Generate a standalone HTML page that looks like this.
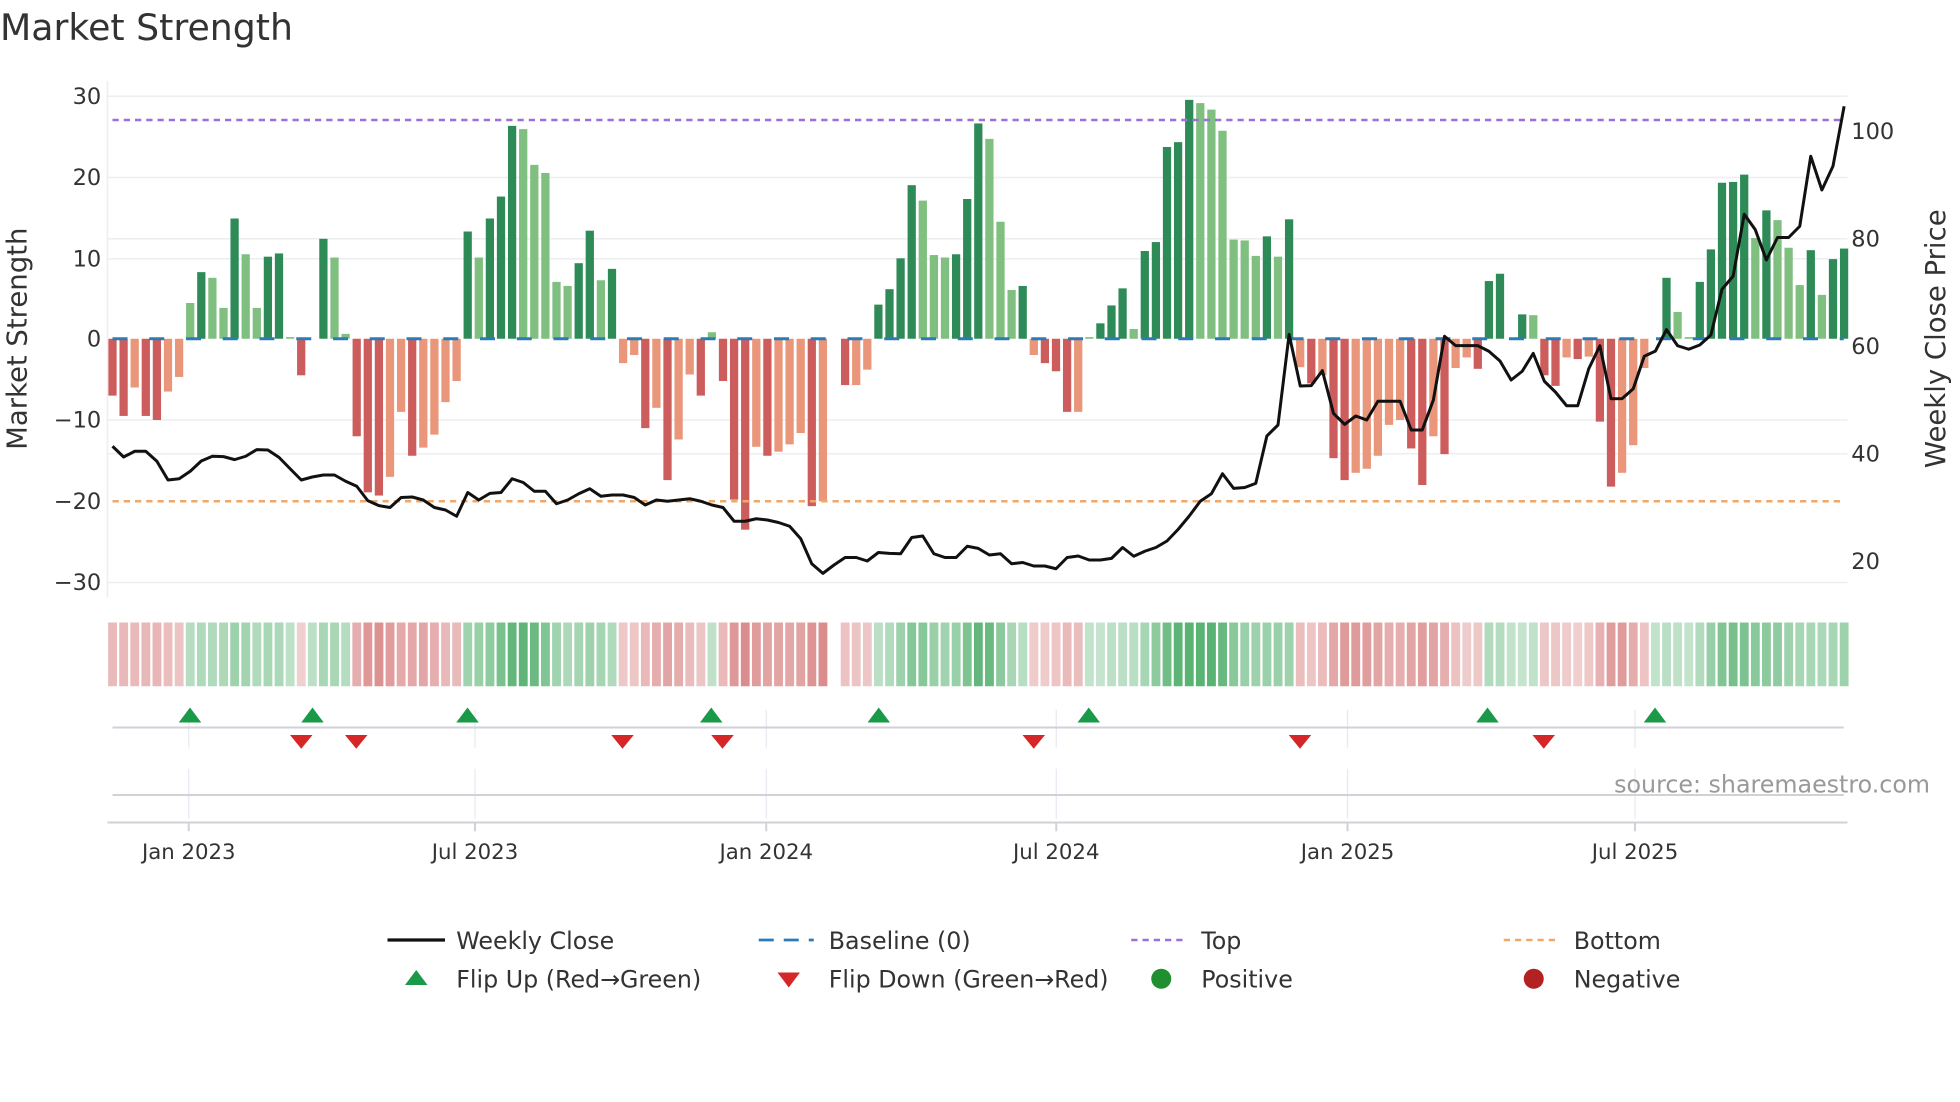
<!DOCTYPE html>
<html><head><meta charset="utf-8"><style>
html,body{margin:0;padding:0;background:#fff;width:1960px;height:1102px;overflow:hidden}
svg{display:block}
text{font-family:"DejaVu Sans","Liberation Sans",sans-serif;fill:#333}
</style></head><body>
<svg id="s" width="1960" height="1102" viewBox="0 0 1568 881.6" xmlns="http://www.w3.org/2000/svg">
<text x="0" y="32" font-size="29">Market Strength</text>
<g stroke="#eceef2" stroke-width="1.2">
<line x1="86" y1="77" x2="1478" y2="77"/><line x1="86" y1="142" x2="1478" y2="142"/><line x1="86" y1="207" x2="1478" y2="207"/><line x1="86" y1="336" x2="1478" y2="336"/><line x1="86" y1="466" x2="1478" y2="466"/>
<line x1="86" y1="191" x2="1478" y2="191"/><line x1="86" y1="363" x2="1478" y2="363"/>
<line x1="86" y1="65" x2="86" y2="478"/>
</g>
<g id="bars"></g>
<g id="base"></g>
<line x1="90" y1="96" x2="1475" y2="96" stroke="#9b6fdc" stroke-width="2" stroke-dasharray="5,4"/>
<line x1="90" y1="401" x2="1475" y2="401" stroke="#f0a868" stroke-width="2" stroke-dasharray="5,4"/>
<polyline id="price" fill="none" stroke="#111" stroke-width="2.4" stroke-linejoin="round"/>
<g font-size="18" text-anchor="end">
<text x="81" y="83">30</text><text x="81" y="148">20</text><text x="81" y="213">10</text><text x="81" y="277">0</text><text x="81" y="342">−10</text><text x="81" y="407">−20</text><text x="81" y="472">−30</text>
</g>
<g font-size="18">
<text x="1481" y="111">100</text><text x="1481" y="197">80</text><text x="1481" y="283">60</text><text x="1481" y="369">40</text><text x="1481" y="455">20</text>
</g>
<text font-size="22" transform="translate(21,271) rotate(-90)" text-anchor="middle">Market Strength</text>
<text font-size="22" transform="translate(1556,271) rotate(-90)" text-anchor="middle">Weekly Close Price</text>
<g id="strip"></g>
<g stroke="#e6eaf0" stroke-width="1">
<line x1="151" y1="568" x2="151" y2="598"/><line x1="380" y1="568" x2="380" y2="598"/><line x1="613" y1="568" x2="613" y2="598"/><line x1="845" y1="568" x2="845" y2="598"/><line x1="1078" y1="568" x2="1078" y2="598"/><line x1="1308" y1="568" x2="1308" y2="598"/>
<line x1="151" y1="615" x2="151" y2="655"/><line x1="380" y1="615" x2="380" y2="655"/><line x1="613" y1="615" x2="613" y2="655"/><line x1="845" y1="615" x2="845" y2="655"/><line x1="1078" y1="615" x2="1078" y2="655"/><line x1="1308" y1="615" x2="1308" y2="655"/>
</g>
<g stroke="#d0d2d8" stroke-width="1.6">
<line x1="90" y1="582" x2="1475" y2="582"/><line x1="90" y1="636" x2="1475" y2="636"/><line x1="86" y1="658" x2="1478" y2="658"/>
<line x1="151" y1="658" x2="151" y2="665"/><line x1="380" y1="658" x2="380" y2="665"/><line x1="613" y1="658" x2="613" y2="665"/><line x1="845" y1="658" x2="845" y2="665"/><line x1="1078" y1="658" x2="1078" y2="665"/><line x1="1308" y1="658" x2="1308" y2="665"/>
</g>
<g id="marks"></g>
<g font-size="17" text-anchor="middle">
<text x="151" y="687">Jan 2023</text><text x="380" y="687">Jul 2023</text><text x="613" y="687">Jan 2024</text><text x="845" y="687">Jul 2024</text><text x="1078" y="687">Jan 2025</text><text x="1308" y="687">Jul 2025</text>
</g>
<text x="1544" y="634" font-size="19" text-anchor="end" style="fill:#999">source: sharemaestro.com</text>
<g font-size="19">
<line x1="310" y1="752" x2="356" y2="752" stroke="#111" stroke-width="2.6"/>
<text x="365" y="759">Weekly Close</text>
<polygon points="324,788 342,788 333,776" fill="#1a9a48"/>
<text x="365" y="790">Flip Up (Red→Green)</text>
<line x1="607" y1="752" x2="651" y2="752" stroke="#2b7bb9" stroke-width="2.2" stroke-dasharray="12,8"/>
<text x="663" y="759">Baseline (0)</text>
<polygon points="622,778 640,778 631,790" fill="#d62728"/>
<text x="663" y="790">Flip Down (Green→Red)</text>
<line x1="905" y1="752" x2="949" y2="752" stroke="#9b6fdc" stroke-width="2" stroke-dasharray="5,4"/>
<text x="961" y="759">Top</text>
<circle cx="929" cy="783" r="8" fill="#1f8f2f"/>
<text x="961" y="790">Positive</text>
<line x1="1203" y1="752" x2="1247" y2="752" stroke="#f0a868" stroke-width="2" stroke-dasharray="5,4"/>
<text x="1259" y="759">Bottom</text>
<circle cx="1227" cy="783" r="8" fill="#b22222"/>
<text x="1259" y="790">Negative</text>
</g>
</svg>
<script>
var V=[-7,-9.5,-6,-9.5,-10,-6.5,-4.7,
4.4,8.2,7.5,3.8,14.8,10.4,3.8,10.1,10.5,
0.2,-4.5,0,12.3,10,0.6,
-12,-18.9,-19.3,-17,-9,-14.4,-13.4,-11.8,-7.8,-5.2,
13.2,10,14.8,17.5,26.2,25.8,21.4,20.4,7,6.5,9.3,13.3,7.2,8.6,
-3,-2,-11,-8.5,-17.4,-12.4,-4.4,-7,
0.8,
-5.2,-19.8,-23.5,-13.3,-14.4,-13.9,-13,-11.6,-20.6,-20,
null,
-5.7,-5.7,-3.8,
4.2,6.1,9.9,18.9,17,10.3,10,10.4,17.2,26.5,24.6,14.4,6,6.5,
-2,-3,-4,-9,-9,
0.2,1.9,4.1,6.2,1.2,10.8,11.9,23.6,24.2,29.4,29,28.2,25.6,12.2,12.1,10.2,12.6,10.1,14.7,
-3.5,-5.5,-4.5,-14.7,-17.4,-16.5,-16,-14.4,-10.6,-10,-13.5,-18,-12,-14.2,-3.6,-2.3,-3.7,
7.1,8,0,3,2.9,
-4.5,-5.8,-2.3,-2.5,-2.2,-10.2,-18.2,-16.5,-13.1,-3.6,
0,
7.5,3.3,0.2,7,11,19.2,19.3,20.2,12.4,15.8,14.6,11.2,6.6,10.9,5.4,9.8,11.1];
var P=[357,365.6,361,361,369,384,383,377,368.8,365,365.3,367.7,365,359.7,360,365.9,375,384,381.6,380,380,385,389,400.5,404.5,406,398,397.6,400,406,408,413,394,400,394.7,394,
383,386,393,393,403,400,395,391,397,396,396,398,404,400,401,400,399,401,404,406,417,417,415,416,
418,421,431,451,458.7,452,446,446,448.8,442,442.7,443,430,428.8,443,446,446,437,438.7,444,443,451,450,452.8,452.8,455,446,444.8,448,
448,446.7,438,445,441,438,432.8,423.5,412.8,401,395,379,390.7,390,386.7,348.8,340,267.5,308.8,308.5,296.5,330.7,339.5,332.8,336,321,321,321,344,344,320,269,276.5,276.5,276.5,281,288.8,304,297,282.7,305,313.7,324.6,324.6,295,276.6,319,318.9,311,285,280.9,263.7,276.6,279.4,276,268,231.4,220.9,171.4,183.7,208,190,190,181,125,152,132.9,85];
var NS="http://www.w3.org/2000/svg";
function el(g,t,a){var e=document.createElementNS(NS,t);for(var k in a)e.setAttribute(k,a[k]);document.getElementById(g).appendChild(e);return e;}
var W=8.88,X0=90,prev=0;
for(var i=0;i<V.length;i++){var v=V[i];var x=X0+W*i;if(v===null){prev=0;continue;}
 var h=Math.abs(v)*6.5;var dark=Math.abs(v)>Math.abs(prev);var c;
 if(v>=0)c=dark?"#2e8b57":"#7fbf7f";else c=dark?"#cd5c5c":"#e9967a";
 if(h>0.3)el("bars","rect",{x:x-3.3,y:v>=0?271-h:271,width:6.6,height:h,fill:c});
 prev=v;}
for(var x=90;x<1475;x+=29.4){el("base","line",{x1:x,y1:271,x2:Math.min(x+12,1475),y2:271,stroke:"#2b7bb9","stroke-width":2.4});}
var pts=[];for(var i=0;i<P.length;i++){pts.push((X0+W*i).toFixed(1)+","+P[i]);}
document.getElementById("price").setAttribute("points",pts.join(" "));
for(var i=0;i<V.length;i++){var v=V[i];if(v===null)continue;
 var s=0,n=0;for(var j=i-1;j<=i+1;j++){if(j>=0&&j<V.length&&V[j]!==null){s+=Math.abs(V[j])*(j==i?2:1);n+=(j==i?2:1);}}
 var a=s/n;var sg=v;if(v===0&&i+1<V.length)sg=V[i+1];
 var t=0.25+0.6*Math.min(1,a/26);
 var b=sg>=0?[60,165,90]:[205,95,95];
 var col="rgb("+b.map(function(q){return Math.round(255-(255-q)*t);}).join(",")+")";
 var x=X0+W*i;el("strip","rect",{x:x-4.4+0.9,y:498,width:W-1.8,height:51,fill:col});}
var up=[152,250,374,569,703,871,1190,1324],dn=[241,285,498,578,827,1040,1235];
up.forEach(function(x){el("marks","polygon",{points:(x-9)+",578 "+(x+9)+",578 "+x+",566",fill:"#1a9a48"});});
dn.forEach(function(x){el("marks","polygon",{points:(x-9)+",588 "+(x+9)+",588 "+x+",599",fill:"#d62728"});});
</script>
</body></html>
